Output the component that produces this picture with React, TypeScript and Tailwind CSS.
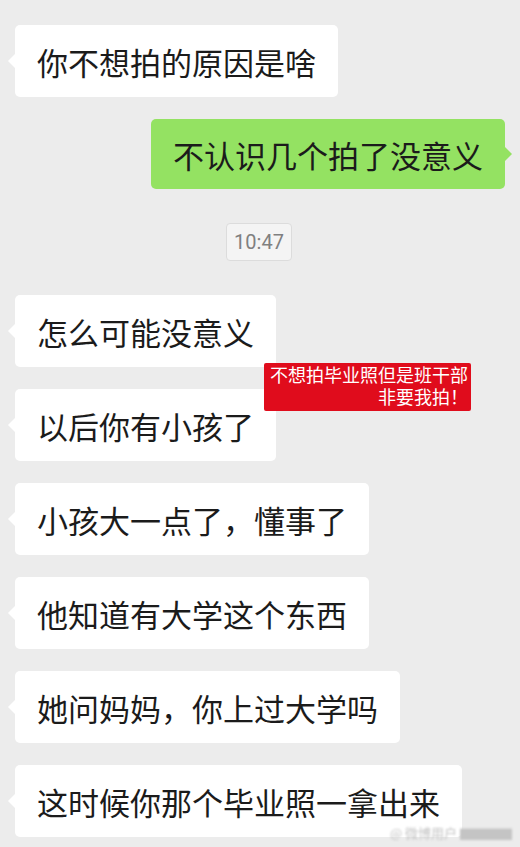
import React from "react";

type Msg = { text: string; mine?: boolean };

const before: Msg[] = [
  { text: "你不想拍的原因是啥" },
  { text: "不认识几个拍了没意义", mine: true },
];

const after: Msg[] = [
  { text: "怎么可能没意义" },
  { text: "以后你有小孩了" },
  { text: "小孩大一点了，懂事了" },
  { text: "他知道有大学这个东西" },
  { text: "她问妈妈，你上过大学吗" },
  { text: "这时候你那个毕业照一拿出来" },
];

function Bubble({ text, mine }: Msg) {
  return (
    <div className={`flex ${mine ? "justify-end pr-[15px]" : "justify-start pl-[15px]"}`}>
      <div
        className={`relative flex items-center rounded-[5px] px-[22px] text-[31px] leading-none text-[#1b1b1b] ${
          mine ? "h-[70px] bg-[#94e262]" : "h-[72px] bg-white"
        }`}
      >
        {mine ? (
          <span className="absolute right-[-7px] top-1/2 h-0 w-0 -translate-y-1/2 border-y-[7px] border-l-[7px] border-y-transparent border-l-[#94e262]" />
        ) : (
          <span className="absolute left-[-7px] top-1/2 h-0 w-0 -translate-y-1/2 border-y-[7px] border-r-[7px] border-y-transparent border-r-white" />
        )}
        <span className="whitespace-nowrap">{text}</span>
      </div>
    </div>
  );
}

export default function App() {
  return (
    <main
      className="relative flex h-[847px] w-[520px] flex-col gap-[22px] overflow-hidden bg-[#ececec] pt-[25px]"
      style={{ fontFamily: '"Noto Sans CJK SC", "Noto Sans", sans-serif' }}
    >
      {before.map((m, i) => (
        <Bubble key={i} {...m} />
      ))}

      {/* time stamp */}
      <div className="flex justify-center py-[12px] pr-[2px]">
        <div
          className="flex h-[38px] w-[66px] items-center justify-center rounded-[4px] border border-[#dcdcdc] bg-[#f4f4f4] text-[20px] text-[#808080]"
          style={{ fontFamily: "Roboto, sans-serif" }}
        >
          10:47
        </div>
      </div>

      {after.map((m, i) => (
        <Bubble key={i} {...m} />
      ))}

      {/* red caption sticker */}
      <div
        className="absolute left-[264px] top-[363px] w-[207px] rounded-[2px] bg-[#e00c1c] px-[3px] py-[2px] text-right text-[18px] leading-[22px] text-white"
        style={{ fontFamily: '"Liberation Sans", "Noto Sans CJK SC", sans-serif' }}
      >
        <p className="whitespace-nowrap">不想拍毕业照但是班干部</p>
        <p className="whitespace-nowrap">非要我拍！</p>
      </div>

      {/* watermark */}
      <div className="absolute right-[8px] top-[826px] whitespace-nowrap text-[13px] leading-none text-[#c4c4c4] blur-[1px]">
        @ 微博用户 ▇▇▇▇
      </div>
    </main>
  );
}
